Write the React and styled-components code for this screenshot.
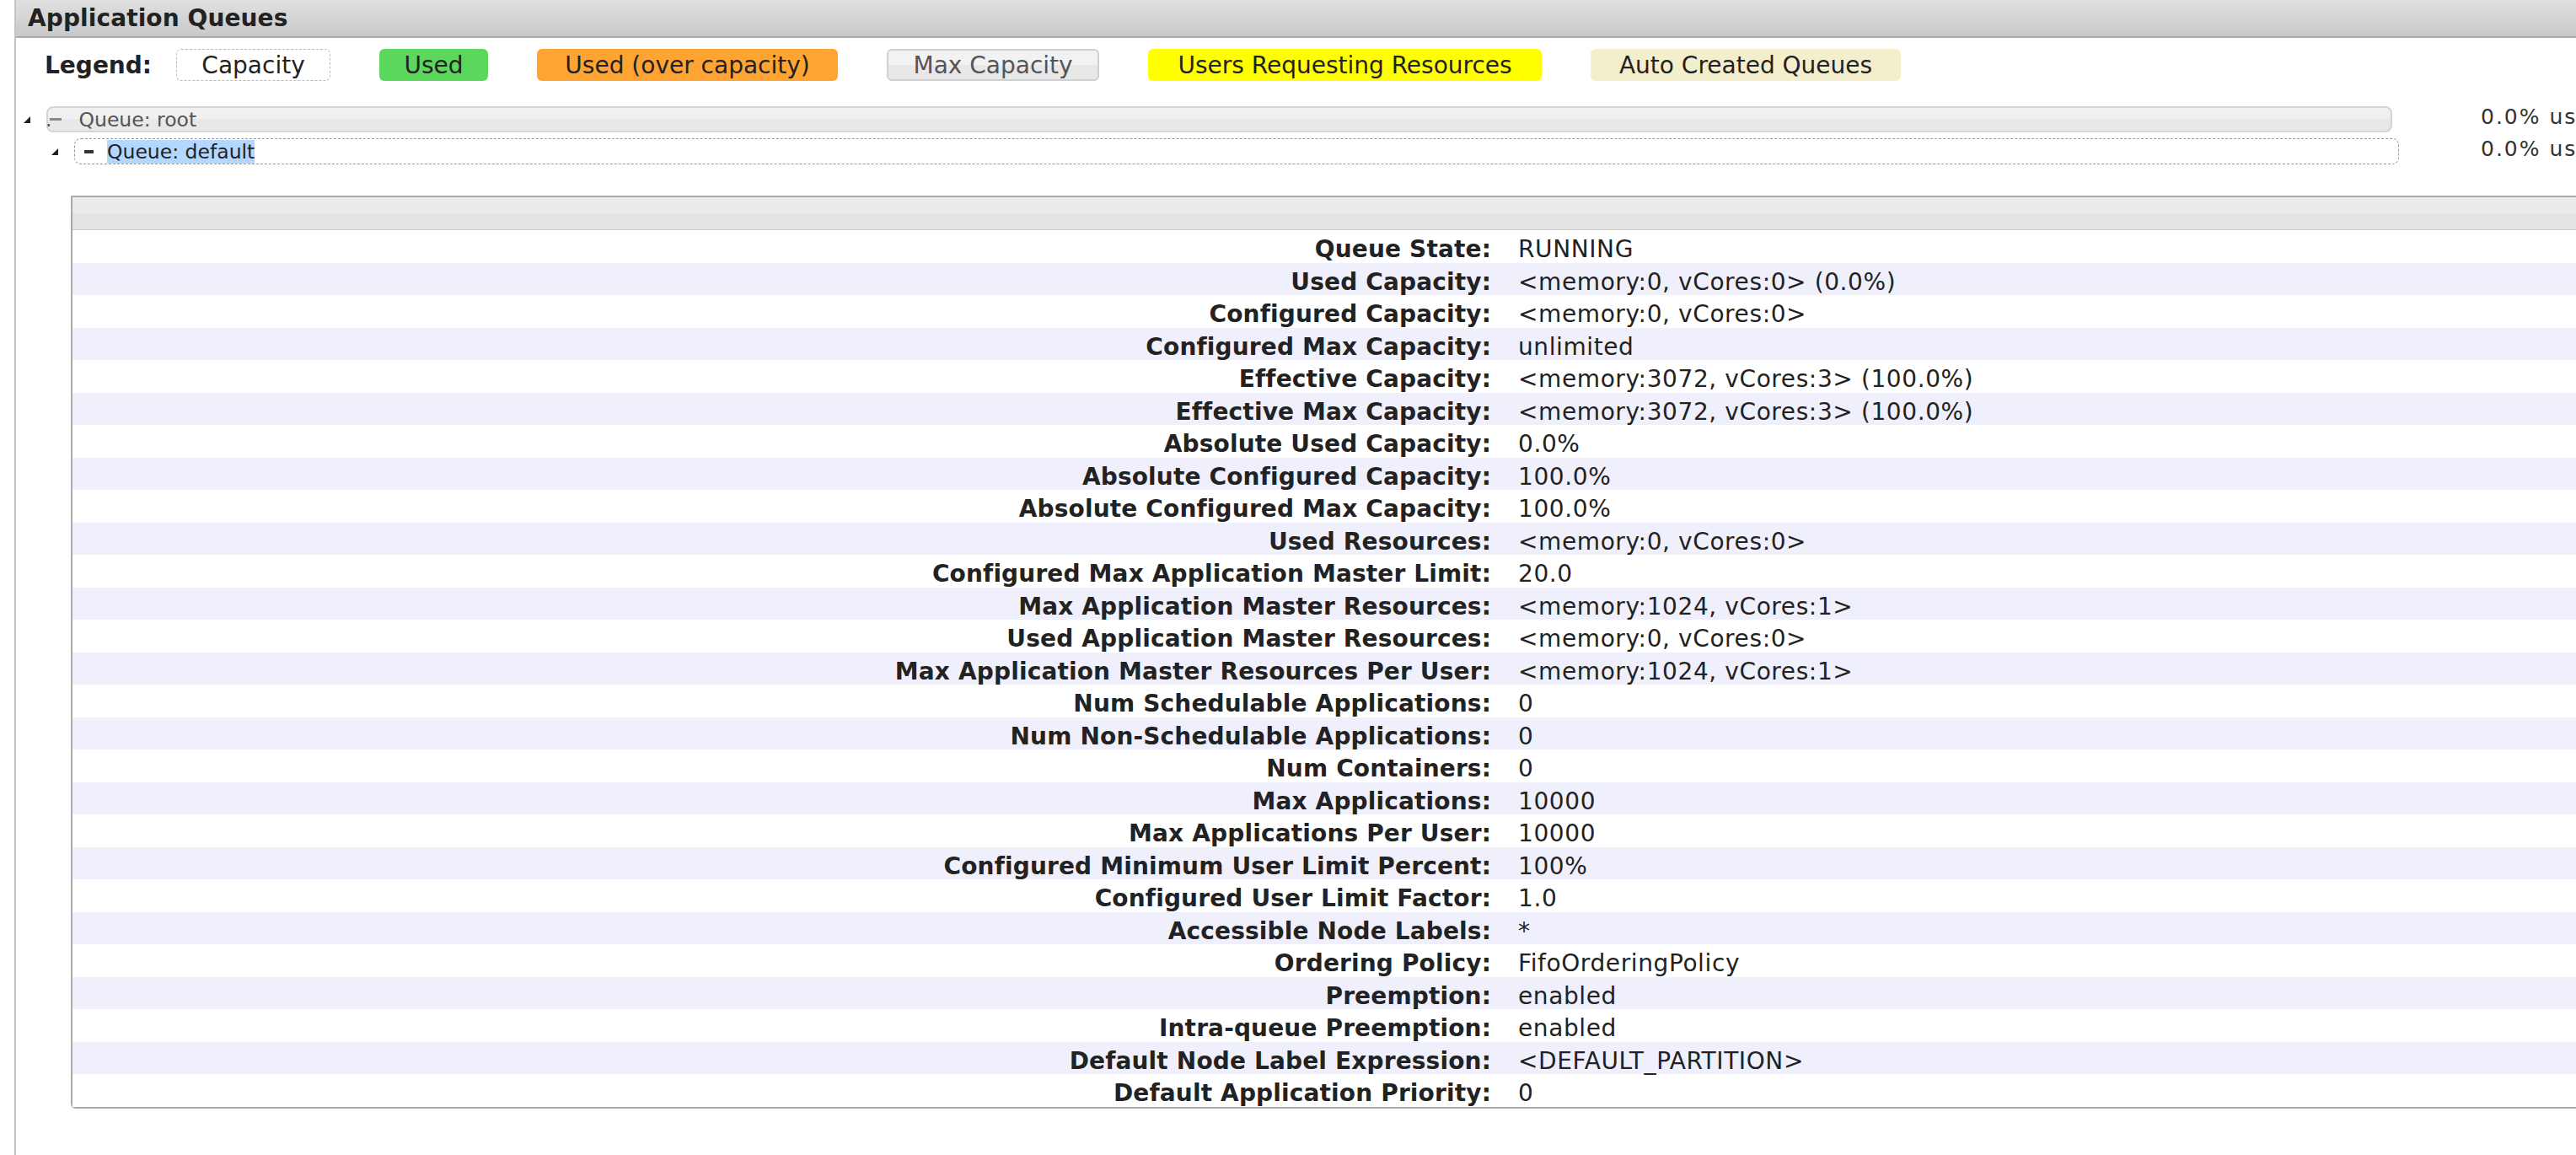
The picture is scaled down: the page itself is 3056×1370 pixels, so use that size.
import React from 'react';
import styled, { createGlobalStyle } from 'styled-components';

const Global = createGlobalStyle`
  html, body { margin: 0; padding: 0; background: #fff; overflow: hidden; }
  body { font-family: "DejaVu Sans", Verdana, sans-serif; color: #222; }
`;

const Page = styled.div`
  width: 3400px;
  min-height: 1370px;
  margin-left: 17px;
  border-left: 2px solid #c4c4c4;
`;

const TitleBar = styled.div`
  height: 43px;
  border-bottom: 2px solid #aaa;
  background: linear-gradient(#e0e0e0, #c9c9c9);
  display: flex;
  align-items: center;
  padding-left: 14px;
  font-size: 28px;
  font-weight: bold;
  letter-spacing: 0.1px;
  color: #222;
`;

const Legend = styled.div`
  display: flex;
  align-items: center;
  margin-top: 13px;
  padding-left: 34px;
  height: 38px;
`;

const LegendLabel = styled.span`
  font-size: 28px;
  font-weight: bold;
  margin-right: 29px;
`;

const LegendItem = styled.span`
  box-sizing: border-box;
  width: ${p => p.$w}px;
  height: 38px;
  display: inline-flex;
  align-items: center;
  justify-content: center;
  margin-right: 58px;
  font-size: 28px;
  border-radius: 6px;
  background: ${p => p.$bg};
  border: ${p => p.$border || 'none'};
  color: ${p => p.$color || '#222'};
`;

const Tree = styled.div`
  margin-top: 30px;
  display: flex;
  flex-direction: column;
  gap: 7px;
`;

const TreeRow = styled.div`
  display: flex;
  align-items: center;
  height: 31px;
`;

const BarArea = styled.div`
  flex: 0 0 2924px;
  display: flex;
  align-items: center;
  padding-left: ${p => 9 + p.$level * 33}px;
  box-sizing: border-box;
`;

const Toggle = styled.span`
  width: 27px;
  flex: 0 0 27px;
  display: flex;
  align-items: center;
`;

const QueueBar = styled.div`
  box-sizing: border-box;
  width: ${p => p.$w}px;
  height: 31px;
  border-radius: 8px;
  display: flex;
  align-items: center;
  font-size: 23.5px;
  white-space: nowrap;
  background: ${p => (p.$root ? 'linear-gradient(#f0f0f0 50%, #e8e8e8 50%)' : '#fff')};
  border: ${p => (p.$root ? '2px solid #d4d4d4' : '1px dashed #999')};
  color: ${p => (p.$root ? '#555' : '#222')};
`;

const Dot = styled.span`
  color: #555;
  margin-left: -3px;
`;

const Dash = styled.span`
  display: inline-block;
  flex: 0 0 auto;
  width: ${p => p.$w}px;
  height: ${p => p.$h}px;
  background: ${p => p.$c};
  margin-left: ${p => p.$ml}px;
  margin-right: ${p => p.$mr}px;
`;

const Selected = styled.span`
  background: #b4d7ff;
  line-height: 28px;
`;

const Stats = styled.span`
  font-size: 25px;
  letter-spacing: 2px;
  color: #333;
  white-space: nowrap;
  align-self: flex-start;
  margin-top: -2px;
`;

const InfoTable = styled.div`
  margin: 37px 0 0 65px;
  border: 2px solid #aaa;
  border-right: none;
  border-radius: 0 0 0 6px;
`;

const InfoHeader = styled.div`
  height: 38px;
  border-bottom: 1px solid #ccc;
  background: linear-gradient(#ebebeb 50%, #e3e3e3 50%);
`;

const InfoRow = styled.div`
  box-sizing: border-box;
  display: grid;
  grid-template-columns: 1700px 1fr;
  height: 38.5px;
  padding-top: 6px;
  align-items: center;
  font-size: 28px;
  background: ${p => (p.$odd ? '#f0f0fc' : '#fff')};
`;

const Label = styled.div`
  text-align: right;
  font-weight: bold;
  letter-spacing: 0.15px;
  padding-right: 17px;
  white-space: nowrap;
`;

const Value = styled.div`
  padding-left: 15px;
  letter-spacing: 0.6px;
  white-space: nowrap;
`;

const Triangle = () => (
  <svg width="8" height="8" viewBox="0 0 8 8">
    <polygon points="8,0 8,8 0,8" fill="#222" />
  </svg>
);

const legend = [
  { t: 'Capacity', w: 183, bg: '#fff', border: '1px dashed #bbb' },
  { t: 'Used', w: 129, bg: '#5bd75b' },
  { t: 'Used (over capacity)', w: 357, bg: '#ffa333' },
  { t: 'Max Capacity', w: 252, bg: 'linear-gradient(#f2f2f2 50%, #e8e8e8 50%)', border: '2px solid #d0d0d0', color: '#555' },
  { t: 'Users Requesting Resources', w: 467, bg: '#ffff00' },
  { t: 'Auto Created Queues', w: 368, bg: '#f3efcc' },
];

const rows = [
  ['Queue State:', 'RUNNING'],
  ['Used Capacity:', '<memory:0, vCores:0> (0.0%)'],
  ['Configured Capacity:', '<memory:0, vCores:0>'],
  ['Configured Max Capacity:', 'unlimited'],
  ['Effective Capacity:', '<memory:3072, vCores:3> (100.0%)'],
  ['Effective Max Capacity:', '<memory:3072, vCores:3> (100.0%)'],
  ['Absolute Used Capacity:', '0.0%'],
  ['Absolute Configured Capacity:', '100.0%'],
  ['Absolute Configured Max Capacity:', '100.0%'],
  ['Used Resources:', '<memory:0, vCores:0>'],
  ['Configured Max Application Master Limit:', '20.0'],
  ['Max Application Master Resources:', '<memory:1024, vCores:1>'],
  ['Used Application Master Resources:', '<memory:0, vCores:0>'],
  ['Max Application Master Resources Per User:', '<memory:1024, vCores:1>'],
  ['Num Schedulable Applications:', '0'],
  ['Num Non-Schedulable Applications:', '0'],
  ['Num Containers:', '0'],
  ['Max Applications:', '10000'],
  ['Max Applications Per User:', '10000'],
  ['Configured Minimum User Limit Percent:', '100%'],
  ['Configured User Limit Factor:', '1.0'],
  ['Accessible Node Labels:', '*'],
  ['Ordering Policy:', 'FifoOrderingPolicy'],
  ['Preemption:', 'enabled'],
  ['Intra-queue Preemption:', 'enabled'],
  ['Default Node Label Expression:', '<DEFAULT_PARTITION>'],
  ['Default Application Priority:', '0'],
];

export default function App() {
  return (
    <>
      <Global />
      <Page>
        <TitleBar>Application Queues</TitleBar>
        <Legend>
          <LegendLabel>Legend:</LegendLabel>
          {legend.map(l => (
            <LegendItem key={l.t} $w={l.w} $bg={l.bg} $border={l.border} $color={l.color}>
              {l.t}
            </LegendItem>
          ))}
        </Legend>
        <Tree>
          <TreeRow>
            <BarArea $level={0}>
              <Toggle><Triangle /></Toggle>
              <QueueBar $root $w={2783}>
                <Dot>.</Dot>
                <Dash $w={14} $h={3} $c="#888" $ml={-2} $mr={20} />
                Queue: root
              </QueueBar>
            </BarArea>
            <Stats>0.0% used</Stats>
          </TreeRow>
          <TreeRow>
            <BarArea $level={1}>
              <Toggle><Triangle /></Toggle>
              <QueueBar $w={2758}>
                <Dash $w={11} $h={4} $c="#333" $ml={11} $mr={16} />
                <Selected>Queue: default</Selected>
              </QueueBar>
            </BarArea>
            <Stats>0.0% used</Stats>
          </TreeRow>
        </Tree>
        <InfoTable>
          <InfoHeader />
          {rows.map(([k, v], i) => (
            <InfoRow key={k} $odd={i % 2 === 1}>
              <Label>{k}</Label>
              <Value>{v}</Value>
            </InfoRow>
          ))}
        </InfoTable>
      </Page>
    </>
  );
}
